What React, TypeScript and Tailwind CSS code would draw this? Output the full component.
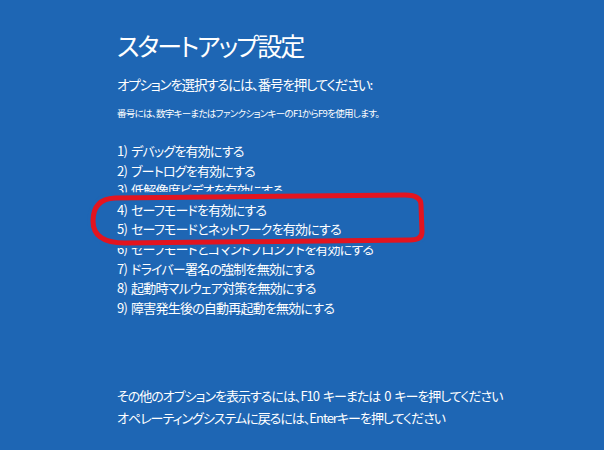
import React from "react";

const items = [
  "1) デバッグを有効にする",
  "2) ブートログを有効にする",
  "3) 低解像度ビデオを有効にする",
  "4) セーフモードを有効にする",
  "5) セーフモードとネットワークを有効にする",
  "6) セーフモードとコマンドプロンプトを有効にする",
  "7) ドライバー署名の強制を無効にする",
  "8) 起動時マルウェア対策を無効にする",
  "9) 障害発生後の自動再起動を無効にする",
];

export default function App() {
  const ring =
    "M 115 198 L 405 195 Q 421 195 421 205 L 422 232 Q 422 240 410 240 L 125 243 Q 93 243 93 221 Q 93 199 115 198 Z";
  return (
    <div className="relative w-[604px] h-[450px] overflow-hidden bg-[#1e66b4] text-white font-['Noto_Sans_CJK_JP','Noto_Sans',sans-serif] [font-feature-settings:'palt']">
      <div className="flex flex-col pl-[117px] pt-[30px]">
        <h1 className="text-[25px] leading-[31px] tracking-[-2px] font-normal">スタートアップ設定</h1>
        <p className="mt-[13px] text-[13.5px] leading-[20px] tracking-[-1.2px]">オプションを選択するには、番号を押してください:</p>
        <p className="mt-[12px] text-[9.5px] leading-[14px] tracking-[-0.7px]">番号には、数字キーまたはファンクションキーのF1からF9を使用します。</p>
        <ul className="mt-[21px] flex flex-col">
          {items.map((t) => (
            <li key={t} className="text-[13px] leading-[19.6px] tracking-[-0.8px] [word-spacing:2px]">{t}</li>
          ))}
        </ul>
        <div className="mt-[68px] flex flex-col">
          <p className="text-[13px] leading-[21.5px] tracking-[-1px] [word-spacing:2px]">その他のオプションを表示するには、F10 キーまたは 0 キーを押してください</p>
          <p className="text-[13px] leading-[21.5px] tracking-[-1px]">オペレーティングシステムに戻るには、Enterキーを押してください</p>
        </div>
      </div>
      <svg className="absolute left-0 top-0" width="604" height="450" viewBox="0 0 604 450">
        <defs>
          <mask id="outside">
            <rect x="0" y="0" width="604" height="450" fill="white" />
            <path d={ring} fill="black" />
          </mask>
        </defs>
        <path d={ring} fill="none" stroke="#1e66b4" strokeWidth="11" strokeLinejoin="round" mask="url(#outside)" />
        <path d={ring} fill="none" stroke="#e3141f" strokeWidth="5" strokeLinejoin="round" />
      </svg>
    </div>
  );
}
